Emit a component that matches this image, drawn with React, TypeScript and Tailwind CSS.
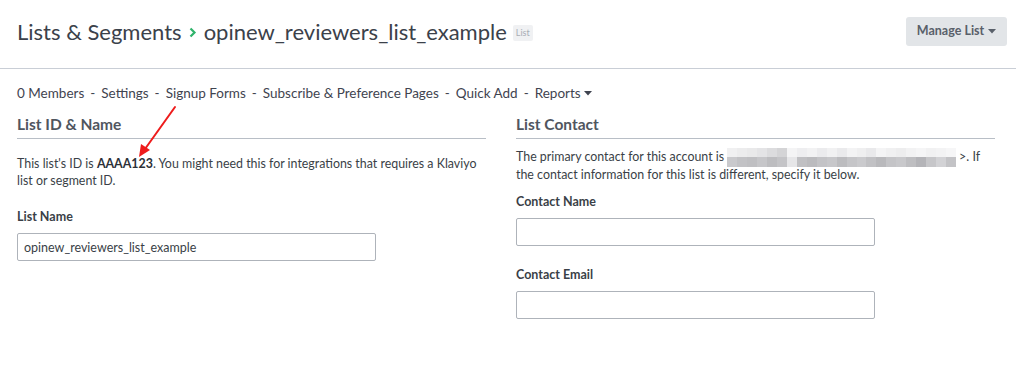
import React from "react";

const navItems = [
  "0 Members",
  "Settings",
  "Signup Forms",
  "Subscribe & Preference Pages",
  "Quick Add",
];

// pixelated blur over the contact email
const blurTop = ["#f0f0f1", "#ececed", "#e9e9ea", "#e4e4e6", "#dcdcde", "#d4d4d6", "#f4f4f5", "#eeeef0", "#f2f2f3", "#ebebed", "#f1f1f2", "#eaeaec", "#f3f3f4", "#efeff0", "#e9e9eb", "#f4f4f5", "#f0f0f1", "#ededee", "#f2f2f3", "#f5f5f6", "#f1f1f2", "#f3f3f4", "#f6f6f7"];
const blurBottom = ["#c9c9cc", "#c2c2c5", "#bfbfc2", "#c6c6c9", "#bdbdc0", "#c4c4c7", "#e6e6e8", "#c0c0c3", "#bbbbbe", "#c3c3c6", "#c7c7ca", "#bcbcbf", "#c5c5c8", "#cacacd", "#c1c1c4", "#b9b9bc", "#c4c4c7", "#c8c8cb", "#bebec1", "#b4b4b8", "#c6c6c9", "#d2d2d5", "#c3c3c6"];

const Blurred = () => (
  <span className="inline-flex flex-col align-middle w-[229px] h-[19px] mx-[3px]">
    <span className="flex h-[9px]">
      {blurTop.map((c, i) => (
        <span key={i} className="flex-1" style={{ background: c }} />
      ))}
    </span>
    <span className="flex h-[10px]">
      {blurBottom.map((c, i) => (
        <span key={i} className="flex-1" style={{ background: c }} />
      ))}
    </span>
  </span>
);

const Field = ({ label, value }: { label: string; value?: string }) => (
  <div>
    <div className="text-[12.5px] font-bold text-[#3a3f47] leading-[16px]">{label}</div>
    <input
      readOnly
      value={value ?? ""}
      className="mt-[8px] w-[359px] h-[28px] border border-[#aeb3ba] rounded-[2px] px-[6px] text-[12.5px] text-[#3a3f47] outline-none font-['Lato']"
    />
  </div>
);

export default function App() {
  return (
    <div className="relative w-[1024px] h-[377px] bg-white overflow-hidden font-['Lato',sans-serif] text-[#3a3f47]">
      {/* Header */}
      <div className="w-[1016px] h-[69px] flex items-center justify-between pl-[17px] pr-[9px] border-b border-[#c9ced6] pb-[5px]">
        <div className="flex items-center">
          <span className="text-[22px] text-[#3b414a]">Lists &amp; Segments</span>
          <svg className="mx-[7px] mt-[2px]" width="8" height="11" viewBox="0 0 8 11">
            <path d="M1.5 1.5 L5.5 5.5 L1.5 9.5" fill="none" stroke="#2fb36b" strokeWidth="2.2" />
          </svg>
          <span className="text-[22px] text-[#3b414a]">opinew_reviewers_list_example</span>
          <span className="ml-[6px] mt-[3px] bg-[#f0f1f3] text-[#a9aeb5] text-[9px] px-[3px] py-[1px] rounded-[2px]">List</span>
        </div>
        <button className="w-[101px] h-[29px] bg-[#e2e5e8] rounded-[3px] text-[12.5px] font-bold text-[#59606a] flex items-center justify-center gap-[4px] mb-[1px]">
          Manage List
          <svg width="8" height="5" viewBox="0 0 8 5">
            <path d="M0 0 H8 L4 4.5 Z" fill="#59606a" />
          </svg>
        </button>
      </div>

      {/* Sub nav */}
      <div className="pl-[17px] mt-[14px] text-[13.5px] text-[#3f4450] flex items-center">
        {navItems.map((n) => (
          <React.Fragment key={n}>
            <span>{n}</span>
            <span className="mx-[6px]">-</span>
          </React.Fragment>
        ))}
        <span>Reports</span>
        <svg className="ml-[3px]" width="8" height="5" viewBox="0 0 8 5">
          <path d="M0 0 H8 L4 4.5 Z" fill="#3f4450" />
        </svg>
      </div>

      {/* Columns */}
      <div className="flex pl-[17px] mt-[11px] gap-[30px]">
        <div className="w-[469px]">
          <h2 className="text-[15.5px] font-bold text-[#50565f] leading-[20px] pb-[4px] border-b border-[#b8bec6]">
            List ID &amp; Name
          </h2>
          <p className="mt-[16px] text-[12.4px] leading-[17px] pr-[4px]">
            This list's ID is <b className="font-bold text-[#2c3138]">AAAA123</b>. You might need this for integrations that requires a Klaviyo list or segment ID.
          </p>
          <div className="mt-[20px]">
            <Field label="List Name" value="opinew_reviewers_list_example" />
          </div>
        </div>
        <div className="w-[479px]">
          <h2 className="text-[15.5px] font-bold text-[#50565f] leading-[20px] pb-[4px] border-b border-[#b8bec6]">
            List Contact
          </h2>
          <p className="mt-[9px] text-[12.4px] leading-[16px] pr-[10px]">
            The primary contact for this account is
            <Blurred />
            &gt;. If the contact information for this list is different, specify it below.
          </p>
          <div className="mt-[11px]">
            <Field label="Contact Name" />
          </div>
          <div className="mt-[21px]">
            <Field label="Contact Email" />
          </div>
        </div>
      </div>

      {/* Annotation arrow */}
      <svg className="absolute left-0 top-0 pointer-events-none" width="1024" height="377">
        <line x1="175" y1="107" x2="145" y2="149" stroke="#ee1c1c" strokeWidth="2" strokeLinecap="round" />
        <polygon points="139,157 141,144 150,150" fill="#ee1c1c" />
      </svg>
    </div>
  );
}
